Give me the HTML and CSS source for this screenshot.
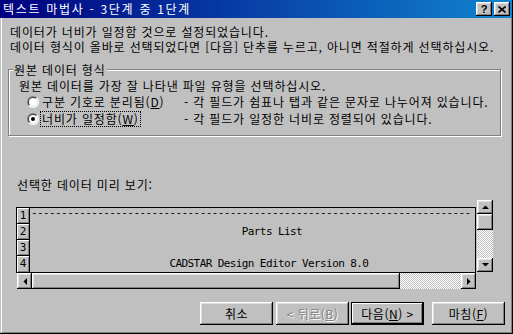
FILE: index.html
```html
<!DOCTYPE html>
<html lang="ko">
<head>
<meta charset="utf-8">
<link rel="stylesheet" href="styles.css">
</head>
<body>
<div class="window">
  <div class="titlebar">
    <span class="title">텍스트 마법사 - 3단계 중 1단계</span>
    <div class="tbtns">
      <span class="tbtn help">?</span>
      <span class="tbtn"><svg width="8" height="7" viewBox="0 0 8 7"><path d="M0.5 0.5 L7.5 6.5 M7.5 0.5 L0.5 6.5" stroke="#000" stroke-width="1.6" fill="none"/></svg></span>
    </div>
  </div>
  <div class="content">
    <p class="intro">데이터가 너비가 일정함 것으로 설정되었습니다.<br>데이터 형식이 올바로 선택되었다면 [다음] 단추를 누르고, 아니면 적절하게 선택하십시오.</p>
    <div class="group">
      <span class="legend">원본 데이터 형식</span>
      <div class="hint">원본 데이터를 가장 잘 나타낸 파일 유형을 선택하십시오.</div>
      <div class="opt">
        <span class="radio"><span class="radio-ring"><span class="radio-face"></span></span></span>
        <span class="opt-label">구분 기호로 분리됨(<u>D</u>)</span>
        <span class="opt-desc">- 각 필드가 쉼표나 탭과 같은 문자로 나누어져 있습니다.</span>
      </div>
      <div class="opt">
        <span class="radio"><span class="radio-ring"><span class="radio-face"><span class="dot"></span></span></span></span>
        <span class="opt-label"><span class="focus">너비가 일정함(<u>W</u>)</span></span>
        <span class="opt-desc">- 각 필드가 일정한 너비로 정렬되어 있습니다.</span>
      </div>
    </div>
    <div class="preview-label">선택한 데이터 미리 보기:</div>
    <div class="preview">
      <div class="preview-main">
        <div class="grid">
          <div class="heads">
            <div class="head">1</div>
            <div class="head">2</div>
            <div class="head">3</div>
            <div class="head">4</div>
          </div>
          <div class="lines">
            <div class="line dashes">-------------------------------------------------------------------------</div>
            <div class="line">                                   Parts List</div>
            <div class="line"> </div>
            <div class="line">                       CADSTAR Design Editor Version 8.0</div>
          </div>
        </div>
        <div class="hscroll">
          <span class="sbtn"><svg width="4" height="7" viewBox="0 0 4 7"><polygon points="4,0 4,7 0.5,3.5" fill="#000"/></svg></span>
          <span class="hthumb"></span>
          <span class="track"></span>
          <span class="sbtn"><svg width="4" height="7" viewBox="0 0 4 7"><polygon points="0,0 0,7 3.5,3.5" fill="#000"/></svg></span>
        </div>
      </div>
      <div class="vscroll">
        <span class="sbtn up"><svg width="7" height="4" viewBox="0 0 7 4"><polygon points="0,4 7,4 3.5,0.5" fill="#000"/></svg></span>
        <span class="vthumb"></span>
        <span class="track"></span>
        <span class="sbtn down"><svg width="7" height="4" viewBox="0 0 7 4"><polygon points="0,0 7,0 3.5,3.5" fill="#000"/></svg></span>
      </div>
    </div>
    <div class="buttons">
      <button class="btn">취소</button>
      <button class="btn disabled">&lt; 뒤로(<u>B</u>)</button>
      <button class="btn default">다음(<u>N</u>) &gt;</button>
      <button class="btn finish">마침(<u>F</u>)</button>
    </div>
  </div>
</div>
</body>
</html>
```
FILE: styles.css
```css
* { box-sizing: border-box; }
html, body { margin: 0; padding: 0; }
body {
  width: 513px;
  height: 334px;
  overflow: hidden;
  background: #c0c0c0;
  font-family: "Noto Sans CJK KR", "Noto Sans", sans-serif;
  font-size: 12px;
  color: #000;
}
.window {
  width: 513px;
  height: 334px;
  display: flex;
  flex-direction: column;
  background: #c0c0c0;
  border-right: 1px solid #000;
  border-bottom: 1px solid #000;
}
.titlebar {
  height: 18px;
  flex: none;
  display: flex;
  align-items: center;
  justify-content: space-between;
  padding: 0 2px 0 3px;
  background: linear-gradient(to right, #000080, #1084d0);
  color: #fff;
}
.title { font-size: 12px; line-height: 18px; letter-spacing: 1.7px; }
.tbtns { display: flex; gap: 2px; }
.tbtn {
  width: 16px;
  height: 14px;
  display: flex;
  align-items: center;
  justify-content: center;
  background: #c0c0c0;
  color: #000;
  box-shadow: inset -1px -1px #000, inset 1px 1px #fff, inset -2px -2px #808080, inset 2px 2px #dfdfdf;
}
.tbtn.help {
  font-family: "Liberation Sans", sans-serif;
  font-weight: bold;
  font-size: 11px;
  line-height: 14px;
}
.content {
  flex: 1;
  margin-left: 1px;
  border-left: 1px solid #fff;
  border-right: 1px solid #808080;
  border-bottom: 1px solid #808080;
  padding: 0 6px;
  display: flex;
  flex-direction: column;
  letter-spacing: 0.85px;
}
.intro {
  margin: 6px 0 0 2px;
  line-height: 15px;
  white-space: nowrap;
}
.group {
  position: relative;
  margin-top: 15px;
  width: 493px;
  border: 1px solid #808080;
  box-shadow: inset 1px 1px #fff, 1px 1px #fff;
  padding: 8px 0 8px 10px;
}
.legend {
  position: absolute;
  left: 4px;
  top: -8px;
  line-height: 15px;
  padding: 0 1px;
  background: #c0c0c0;
}
.hint { line-height: 15px; white-space: nowrap; }
.opt {
  height: 17px;
  display: flex;
  align-items: center;
  white-space: nowrap;
}
.radio {
  width: 12px;
  height: 12px;
  margin-left: 8px;
  border-radius: 50%;
  padding: 1px;
  background: linear-gradient(135deg, #808080 50%, #fff 50%);
}
.radio-ring {
  display: block;
  width: 10px;
  height: 10px;
  border-radius: 50%;
  padding: 1px;
  background: linear-gradient(135deg, #404040 50%, #dfdfdf 50%);
}
.radio-face {
  display: flex;
  align-items: center;
  justify-content: center;
  width: 8px;
  height: 8px;
  border-radius: 50%;
  background: #fff;
}
.dot { width: 4px; height: 4px; border-radius: 50%; background: #000; }
.opt-label { width: 142px; margin-left: 3px; }
.focus {
  border: 1px dotted #000;
  padding: 0 1px;
  margin-left: -2px;
  line-height: 14px;
  display: inline-block;
}
.preview-label {
  margin: 41px 0 0 9px;
  line-height: 15px;
}
.preview {
  display: flex;
  margin: 8px 0 0 8px;
}
.preview-main {
  margin-top: 7px;
  width: 460px;
}
.grid {
  height: 66px;
  border: 1px solid #000;
  display: flex;
  background: #c0c0c0;
}
.heads {
  width: 13px;
  flex: none;
  border-right: 1px solid #000;
}
.head {
  height: 16px;
  border-bottom: 1px solid #000;
  box-shadow: inset 1px 1px #fff, inset -1px -1px #808080;
  font-family: "DejaVu Sans Mono", monospace;
  font-size: 11px;
  letter-spacing: 0;
  line-height: 16px;
  text-align: center;
}
.head:last-child { border-bottom: 0; }
.lines { flex: 1; padding-left: 1px; }
.line {
  height: 16px;
  font-family: "DejaVu Sans Mono", monospace;
  font-size: 11px;
  letter-spacing: -0.6px;
  line-height: 16px;
  white-space: pre;
}
.line.dashes { line-height: 10px; }
.hscroll {
  display: flex;
  height: 16px;
  margin-left: 1px;
}
.sbtn {
  width: 16px;
  height: 16px;
  flex: none;
  display: flex;
  align-items: center;
  justify-content: center;
  background: #c0c0c0;
  box-shadow: inset -1px -1px #000, inset 1px 1px #fff, inset -2px -2px #808080, inset 2px 2px #dfdfdf;
}
.sbtn svg { display: block; }
.hscroll .sbtn { width: 15px; }
.hthumb {
  width: 368px;
  flex: none;
  background: #c0c0c0;
  box-shadow: inset -1px -1px #000, inset 1px 1px #fff, inset -2px -2px #808080, inset 2px 2px #dfdfdf;
}
.track {
  flex: 1;
  background: repeating-conic-gradient(#c0c0c0 0 25%, #fff 0 50%) 0 0 / 2px 2px;
}
.vscroll {
  width: 16px;
  height: 72px;
  margin-left: 1px;
  display: flex;
  flex-direction: column;
}
.vscroll .sbtn { height: 14px; }
.vthumb {
  height: 16px;
  flex: none;
  background: #c0c0c0;
  box-shadow: inset -1px -1px #000, inset 1px 1px #fff, inset -2px -2px #808080, inset 2px 2px #dfdfdf;
}
.buttons {
  display: flex;
  justify-content: flex-end;
  margin-top: 13px;
  letter-spacing: 0.5px;
}
.btn {
  width: 73px;
  height: 23px;
  margin: 0;
  padding: 0;
  border: 0;
  font: inherit;
  font-size: 12px;
  letter-spacing: inherit;
  color: #000;
  background: #c0c0c0;
  box-shadow: inset -1px -1px #000, inset 1px 1px #fff, inset -2px -2px #808080, inset 2px 2px #dfdfdf;
  margin-left: 3px;
}
.btn.disabled { color: #808080; text-shadow: 1px 1px #fff; }
.btn.default {
  margin-left: 2px;
  border: 1px solid #000;
  box-shadow: inset -1px -1px #000, inset 1px 1px #fff, inset -2px -2px #808080;
}
.btn.finish { margin-left: 8px; }
```
